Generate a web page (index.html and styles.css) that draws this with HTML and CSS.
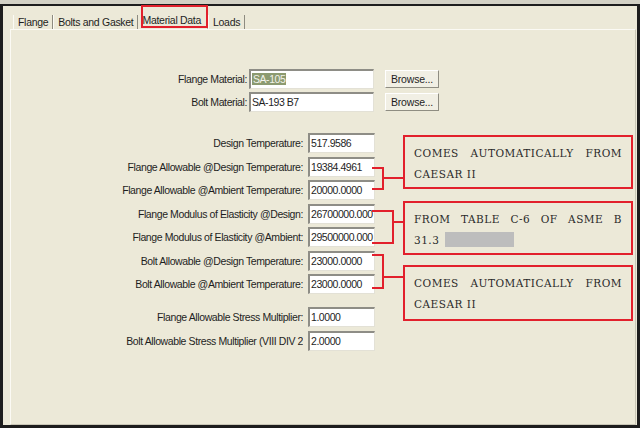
FILE: index.html
```html
<!DOCTYPE html>
<html>
<head>
<meta charset="utf-8">
<link rel="stylesheet" href="styles.css">
</head>
<body>
<div class="window">
  <div class="tabs">
    <div class="tab">Flange</div>
    <div class="tab">Bolts and Gasket</div>
    <div class="tab active">Material Data</div>
    <div class="tab last">Loads</div>
  </div>
  <div class="panel">
    <div class="material-grid">
      <span class="lbl">Flange Material:</span>
      <div class="field"><span class="sel">SA-105</span></div>
      <div class="btn">Browse...</div>
      <span class="lbl">Bolt Material:</span>
      <div class="field">SA-193 B7</div>
      <div class="btn">Browse...</div>
    </div>
    <div class="data-grid">
      <span class="lbl">Design Temperature:</span>
      <div class="field">517.9586</div>
      <span class="lbl">Flange Allowable @Design Temperature:</span>
      <div class="field">19384.4961</div>
      <span class="lbl">Flange Allowable @Ambient Temperature:</span>
      <div class="field">20000.0000</div>
      <span class="lbl">Flange Modulus of Elasticity @Design:</span>
      <div class="field">26700000.000</div>
      <span class="lbl">Flange Modulus of Elasticity @Ambient:</span>
      <div class="field">29500000.000</div>
      <span class="lbl">Bolt Allowable @Design Temperature:</span>
      <div class="field">23000.0000</div>
      <span class="lbl">Bolt Allowable @Ambient Temperature:</span>
      <div class="field">23000.0000</div>
    </div>
    <div class="data-grid mult">
      <span class="lbl">Flange Allowable Stress Multiplier:</span>
      <div class="field">1.0000</div>
      <span class="lbl clip">Bolt Allowable Stress Multiplier (VIII DIV 2</span>
      <div class="field">2.0000</div>
    </div>

    <svg class="brackets" width="626" height="395" viewBox="0 0 626 395">
      <g fill="none" stroke="#e2202c" stroke-width="2">
        <polyline points="361,138 372,138 372,159 361,159"/>
        <line x1="372" y1="148" x2="392" y2="148"/>
        <polyline points="361,181 382,181 382,213 361,213"/>
        <line x1="382" y1="192" x2="392" y2="192"/>
        <polyline points="361,225 372,225 372,258 361,258"/>
        <line x1="372" y1="247" x2="392" y2="247"/>
      </g>
    </svg>
    <div class="callout c1">
      <div class="line full">COMES AUTOMATICALLY FROM</div>
      <div class="line">CAESAR II</div>
    </div>
    <div class="callout c2">
      <div class="line full">FROM TABLE C-6 OF ASME B</div>
      <div class="line">31.3 <span class="redact"></span></div>
    </div>
    <div class="callout c3">
      <div class="line full">COMES AUTOMATICALLY FROM</div>
      <div class="line">CAESAR II</div>
    </div>
  </div>
</div>
</body>
</html>
```

FILE: styles.css
```css
html, body {
  margin: 0;
  padding: 0;
}
body {
  background: #d3d1c5;
  width: 640px;
  height: 428px;
  overflow: hidden;
  font-family: "Liberation Sans", Arial, sans-serif;
  font-size: 10.5px;
  color: #1e1e1e;
}
.window {
  box-sizing: border-box;
  margin-top: 4px;
  width: 640px;
  height: 424px;
  background: #ece9d8;
  border-top: 2px solid #1d1d1d;
  border-left: 3px solid #1d1d1d;
  border-right: 3px solid #1d1d1d;
  border-bottom: 3px solid #1d1d1d;
  padding: 7px 1px 0 7px;
  display: flex;
  flex-direction: column;
}
.tabs {
  display: flex;
  align-items: flex-end;
  height: 16px;
  padding-left: 3px;
}
.tab {
  height: 14px;
  line-height: 14px;
  padding: 0 4px 0 4px;
  border-left: 1px solid #fbfaf4;
  border-right: 1px solid #8d8b80;
  white-space: nowrap;
  letter-spacing: -0.3px;
}
.tab.active {
  position: relative;
  height: 16px;
  line-height: 14px;
  padding: 0 6px 0 2px;
  margin-left: 2px;
  border-left: none;
  border-right: 1px solid #b9b6a8;
}
.tab.active::after {
  content: "";
  position: absolute;
  left: 1px;
  top: -8px;
  width: 63px;
  height: 19px;
  border: 2px solid #e2202c;
}
.panel {
  position: relative;
  flex: 1;
  border-top: 1px solid #fbfaf4;
  border-left: 1px solid #fbfaf4;
  border-right: 1px solid #c9c6b6;
  border-bottom: 1px solid #c9c6b6;
}
.material-grid {
  display: grid;
  grid-template-columns: 236px 125px 63px;
  column-gap: 2px;
  row-gap: 3px;
  margin-top: 39px;
  align-items: center;
}
.material-grid .btn {
  margin-left: 9px;
}
.data-grid {
  display: grid;
  grid-template-columns: 292px 67px;
  column-gap: 5px;
  row-gap: 3.5px;
  margin-top: 21px;
  align-items: center;
}
.data-grid.mult {
  margin-top: 13px;
}
.lbl {
  text-align: right;
  white-space: nowrap;
  letter-spacing: -0.4px;
}
.lbl.clip {
  overflow: hidden;
}
.field {
  box-sizing: border-box;
  height: 20px;
  background: #ffffff;
  border-top: 2px solid #8e8d86;
  border-left: 2px solid #8e8d86;
  border-right: 1px solid #e3e1d6;
  border-bottom: 1px solid #e3e1d6;
  padding: 1px 0 0 1px;
  line-height: 15px;
  white-space: nowrap;
  overflow: hidden;
  letter-spacing: -0.45px;
  font-size: 10.5px;
}
.sel {
  background: #8c9a70;
  color: #f2f2ea;
  padding: 0 1px;
}
.btn {
  box-sizing: border-box;
  height: 18px;
  background: #f1efe4;
  border: 1px solid #fff;
  border-right-color: #8f8d82;
  border-bottom-color: #8f8d82;
  text-align: center;
  line-height: 16px;
  letter-spacing: -0.2px;
}
.brackets {
  position: absolute;
  left: 0;
  top: 0;
  pointer-events: none;
}
.callout {
  position: absolute;
  left: 392px;
  width: 230px;
  box-sizing: border-box;
  border: 2px solid #e2202c;
  padding: 6px 9px 0 9px;
  font-family: "DejaVu Serif", "Liberation Serif", serif;
  font-size: 10.5px;
  color: #2a2a2a;
}
.callout .line {
  line-height: 21px;
  letter-spacing: 0.5px;
  white-space: nowrap;
}
.callout .line.full {
  text-align: justify;
  text-align-last: justify;
  white-space: normal;
}
.c1 { top: 105px; height: 54px; }
.c2 { top: 171px; height: 54px; }
.c3 { top: 235px; height: 56px; }
.redact {
  display: inline-block;
  width: 69px;
  height: 15px;
  background: #bdbdbd;
  vertical-align: -3px;
  margin-left: 2px;
}
```
